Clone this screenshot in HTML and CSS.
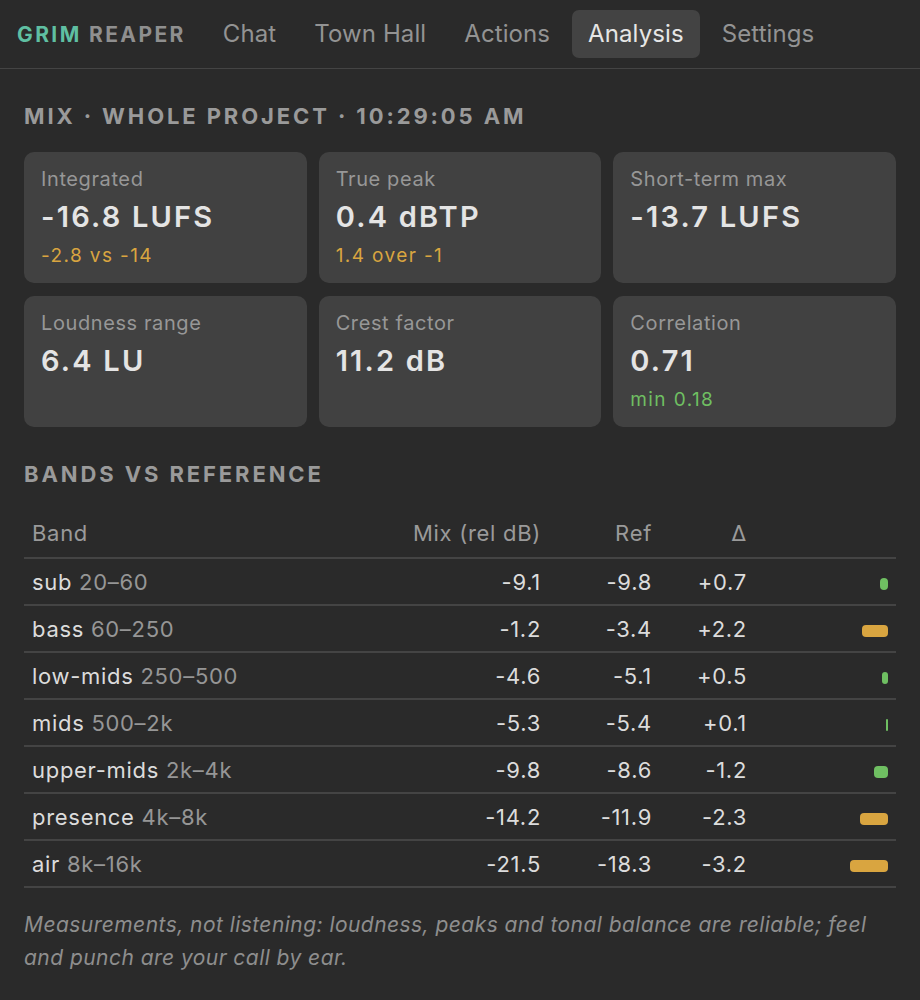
FILE: index.html
```html
<!DOCTYPE html>
<html lang="en">
<head>
<meta charset="utf-8">
<title>Grim Reaper – Analysis</title>
<link rel="stylesheet" href="styles.css">
</head>
<body>
<header class="topbar">
  <div class="logo"><span class="logo-a">GRIM</span> <span class="logo-b">REAPER</span></div>
  <nav class="nav">
    <a class="nav-item">Chat</a>
    <a class="nav-item">Town Hall</a>
    <a class="nav-item">Actions</a>
    <a class="nav-item active">Analysis</a>
    <a class="nav-item">Settings</a>
  </nav>
</header>
<main class="main">
  <h2 class="section-title">MIX · WHOLE PROJECT · 10:29:05 AM</h2>
  <div class="cards">
    <div class="card"><div class="card-label">Integrated</div><div class="card-value">-16.8 LUFS</div><div class="card-sub warn">-2.8 vs -14</div></div>
    <div class="card"><div class="card-label">True peak</div><div class="card-value">0.4 dBTP</div><div class="card-sub warn">1.4 over -1</div></div>
    <div class="card"><div class="card-label">Short-term max</div><div class="card-value">-13.7 LUFS</div></div>
    <div class="card"><div class="card-label">Loudness range</div><div class="card-value">6.4 LU</div></div>
    <div class="card"><div class="card-label">Crest factor</div><div class="card-value">11.2 dB</div></div>
    <div class="card"><div class="card-label">Correlation</div><div class="card-value">0.71</div><div class="card-sub ok">min 0.18</div></div>
  </div>
  <h2 class="section-title bands-title">BANDS VS REFERENCE</h2>
  <table class="bands">
    <colgroup><col><col class="c-mix"><col class="c-ref"><col class="c-delta"><col class="c-bar"></colgroup>
    <thead>
      <tr><th class="l">Band</th><th>Mix (rel dB)</th><th>Ref</th><th>Δ</th><th></th></tr>
    </thead>
    <tbody>
      <tr><td class="l">sub <span class="range">20–60</span></td><td>-9.1</td><td>-9.8</td><td>+0.7</td><td><span class="bar ok-bg" style="width:8px"></span></td></tr>
      <tr><td class="l">bass <span class="range">60–250</span></td><td>-1.2</td><td>-3.4</td><td>+2.2</td><td><span class="bar warn-bg" style="width:26px"></span></td></tr>
      <tr><td class="l">low-mids <span class="range">250–500</span></td><td>-4.6</td><td>-5.1</td><td>+0.5</td><td><span class="bar ok-bg" style="width:6px"></span></td></tr>
      <tr><td class="l">mids <span class="range">500–2k</span></td><td>-5.3</td><td>-5.4</td><td>+0.1</td><td><span class="bar ok-bg" style="width:2px"></span></td></tr>
      <tr><td class="l">upper-mids <span class="range">2k–4k</span></td><td>-9.8</td><td>-8.6</td><td>-1.2</td><td><span class="bar ok-bg" style="width:14px"></span></td></tr>
      <tr><td class="l">presence <span class="range">4k–8k</span></td><td>-14.2</td><td>-11.9</td><td>-2.3</td><td><span class="bar warn-bg" style="width:28px"></span></td></tr>
      <tr><td class="l">air <span class="range">8k–16k</span></td><td>-21.5</td><td>-18.3</td><td>-3.2</td><td><span class="bar warn-bg" style="width:38px"></span></td></tr>
    </tbody>
  </table>
  <p class="note">Measurements, not listening: loudness, peaks and tonal balance are reliable; feel and punch are your call by ear.</p>
</main>
</body>
</html>
```
FILE: styles.css
```css
* { box-sizing: border-box; }
html, body { margin: 0; padding: 0; }
body {
  background: #2a2a2a;
  color: #dcdcdc;
  font-family: Inter, "Noto Sans", "Liberation Sans", sans-serif;
  width: 920px;
  min-height: 1000px;
}
.topbar {
  display: flex;
  align-items: center;
  height: 69px;
  padding: 0 0 0 17px;
  border-bottom: 1px solid #444;
}
.logo {
  font-size: 21px;
  font-weight: 700;
  letter-spacing: 2.4px;
  margin-right: 21px;
  white-space: nowrap;
}
.logo-a { color: #5fbfa2; }
.logo-b { color: #8f8f8f; }
.nav { display: flex; gap: 6px; }
.nav-item {
  font-size: 24px;
  letter-spacing: 0.1px;
  color: #939393;
  padding: 0 16px;
  height: 48px;
  line-height: 48px;
  border-radius: 7px;
}
.nav-item.active { background: #434343; color: #e6e6e6; }
.main { padding: 0 24px; }
.section-title {
  margin: 0;
  padding-top: 34px;
  font-size: 22px;
  font-weight: 700;
  letter-spacing: 2.9px;
  color: #9a9a9a;
  line-height: 26px;
}
.cards {
  display: grid;
  grid-template-columns: repeat(3, 1fr);
  column-gap: 12px;
  row-gap: 13px;
  margin-top: 23px;
}
.card {
  background: #414141;
  border-radius: 10px;
  height: 131px;
  padding: 14px 17px;
}
.card-label { font-size: 20px; letter-spacing: 0.6px; color: #979797; line-height: 26px; }
.card-value { font-size: 29px; letter-spacing: 2.2px; font-weight: 600; color: #e4e4e4; line-height: 36px; margin-top: 7px; }
.card-sub { font-size: 19px; letter-spacing: 1.4px; line-height: 24px; margin-top: 9px; }
.warn { color: #d9a540; }
.ok { color: #6fbf62; }
.bands-title { padding-top: 34px; }
.bands {
  width: 100%;
  border-collapse: collapse;
  margin-top: 22px;
  font-size: 22px;
  letter-spacing: 0.7px;
  table-layout: fixed;
}
.c-mix { width: 169px; }
.c-ref { width: 111px; }
.c-delta { width: 95px; }
.c-bar { width: 141px; }
.bands th, .bands td {
  text-align: right;
  padding: 0 8px;
  white-space: nowrap;
}
.bands th {
  font-weight: 400;
  color: #9a9a9a;
  height: 49px;
  border-bottom: 2px solid #444;
}
.bands td {
  height: 47px;
  color: #dcdcdc;
  border-bottom: 2px solid #444;
}
.bands .l { text-align: left; }
.range { color: #969696; }
.bar { display: inline-block; height: 12px; border-radius: 4px; vertical-align: middle; }
.ok-bg { background: #6fbf62; }
.warn-bg { background: #d9a540; }
.note {
  margin: 20px 0 0;
  font-size: 21px;
  letter-spacing: 0.45px;
  font-style: italic;
  color: #8e8e8e;
  line-height: 33px;
}
```
